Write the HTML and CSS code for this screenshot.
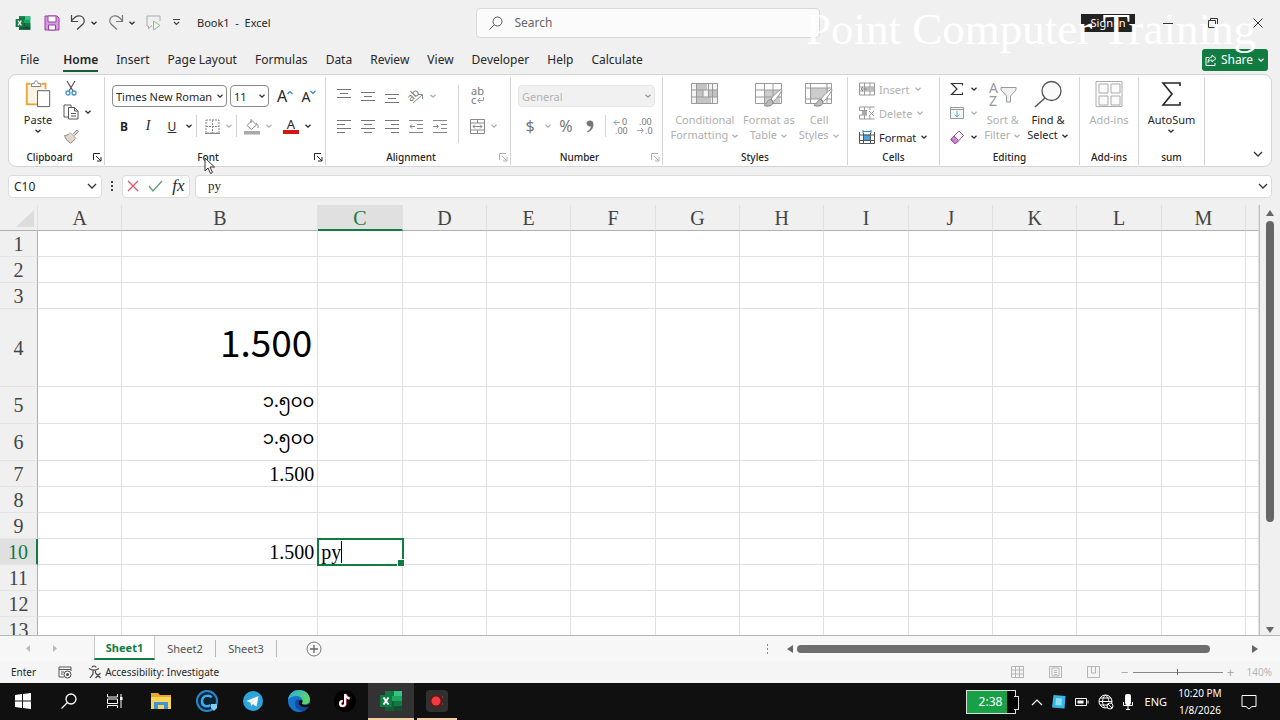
FILE: index.html
```
<!DOCTYPE html>
<html lang="en">

<head>
    <meta charset="UTF-8">
    <meta name="viewport" content="width=device-width, initial-scale=1.0">
    <title>Book1 - Excel</title>
    <link rel="stylesheet" href="styles.css">
</head>

<body>
    <svg class="sprite" aria-hidden="true">
        <symbol id="chev" viewBox="0 0 8 8"><path d="M1.5 2.8 4 5.2 6.5 2.8" fill="none" stroke="currentColor" stroke-width="1.3" /></symbol>
        <symbol id="launch" viewBox="0 0 9 9"><path d="M.5 7V.5H7M3 3l5 5M8 4v4H4" fill="none" stroke="currentColor" /></symbol>
        <symbol id="sigma" viewBox="0 0 22 26"><path d="M20 5V2H3l9 11-9 11h17v-3" fill="none" stroke="currentColor" stroke-width="1.6" /></symbol>
        <symbol id="excel" viewBox="0 0 24 22">
            <path d="M6 1h17v20H6z" fill="#21a366" />
            <path d="M6 1h9v5H6z" fill="#107c41" />
            <path d="M15 1h8v5h-8z" fill="#33c481" />
            <path d="M6 11h9v10H6z" fill="#185c37" />
            <path d="M15 11h8v5h-8z" fill="#107c41" />
            <path d="M15 16h8v5h-8z" fill="#134f30" />
            <path d="M1 5h12v12H1z" fill="#107c41" />
            <path d="m4.5 7.500 5 7M9.500 7.500l-5 7" stroke="#fff" stroke-width="2" />
        </symbol>
        <symbol id="brush" viewBox="0 0 20 20">
            <path d="M18.500 1C14 4 10 8 8 11l2.500 2.500C14 10 17 6 19 2z" fill="#fff" stroke="#999" />
            <path d="M7.500 11.500c-3 0-3 3.500-6.500 6 4 1.500 9 .5 9-3.500z" fill="#bbb" stroke="#888" />
        </symbol>
    </svg>

    <header class="titlebar">
        <div class="quick">
            <svg class="logo" viewBox="0 0 24 22"><use href="#excel" /></svg>
            <button class="tool" aria-label="Save"><svg width="16" height="16" viewBox="0 0 16 16"><path d="M1 1h12l2 2v12H1z" fill="#d99be0" stroke="#9a3fa5" /><path d="M4 1h8v6H4zM4.500 10h7v5h-7z" fill="#fff" stroke="#9a3fa5" /></svg></button>
            <button class="tool" aria-label="Undo"><svg width="16" height="17" viewBox="0 0 16 17"><path d="M1.500 1v6.500H8M1.500 7C4 3.500 7 1 10.500 2s5 5 2.500 8l-6 5.500" fill="none" stroke="#444" stroke-width="1.200" /></svg><svg class="chev"><use href="#chev" /></svg></button>
            <button class="tool" aria-label="Redo"><svg width="16" height="17" viewBox="0 0 16 17"><path d="M14.500 1v6.500H8M14.500 7C12 3.500 9 1 5.500 2s-5 5-2.500 8l6 5.500" fill="none" stroke="#777" stroke-width="1.200" /></svg><svg class="chev"><use href="#chev" /></svg></button>
            <button class="tool" aria-label="Speak cells"><svg width="16" height="16" viewBox="0 0 16 16"><path d="M6 11H5l-2.500 3v-3H1V1h13v5" fill="none" stroke="#aaa" /><path d="m7.500 6 6.500 4.500L7.500 15z" fill="#eef7ee" stroke="#8fbc94" /></svg></button>
            <button class="tool" aria-label="Customize toolbar"><svg width="9" height="9" viewBox="0 0 9 9"><path d="M1 1.500h7M2 4l2.500 2.500L7 4" fill="none" stroke="#444" stroke-width="1.200" /></svg></button>
            <h1>Book1&nbsp; -&nbsp; Excel</h1>
        </div>
        <label class="search">
            <svg width="14" height="14" viewBox="0 0 14 14"><circle cx="8.500" cy="5.500" r="4.500" fill="none" stroke="#555" /><path d="M5.500 8.500.5 13.500" stroke="#555" /></svg>
            <input type="search" placeholder="Search" aria-label="Search">
        </label>
        <div class="window-actions">
            <button class="signin">Sign in</button>
            <button class="win" aria-label="Minimize"><svg width="10" height="10" viewBox="0 0 10 10"><path d="M0 5.500h10" stroke="#333" /></svg></button>
            <button class="win" aria-label="Restore"><svg width="10" height="10" viewBox="0 0 10 10"><path d="M.5 2.500h7v7h-7zM2.500 2.500v-2h7v7h-2" fill="none" stroke="#333" /></svg></button>
            <button class="win" aria-label="Close"><svg width="10" height="10" viewBox="0 0 10 10"><path d="m.5.5 9 9M9.500.5l-9 9" stroke="#333" /></svg></button>
        </div>
        <div class="watermark">Point Computer Training</div>
    </header>

    <nav class="menu">
        <a href="#" class="file">File</a>
        <a href="#" class="active">Home</a>
        <a href="#">Insert</a>
        <a href="#">Page Layout</a>
        <a href="#">Formulas</a>
        <a href="#">Data</a>
        <a href="#">Review</a>
        <a href="#">View</a>
        <a href="#">Developer</a>
        <a href="#">Help</a>
        <a href="#">Calculate</a>
        <button class="share"><svg width="12" height="12" viewBox="0 0 12 12"><path d="M4 3.500H1v8h9V9M7 1l4 3.500L7 8V6C5 6 4 7 3 8.500 3 5 5 3 7 3z" fill="none" stroke="#fff" /></svg>Share<svg class="chev"><use href="#chev" /></svg></button>
    </nav>

    <section class="ribbon">
        <div class="group clipboard">
            <div class="body">
                <button class="big"><svg width="28" height="30" viewBox="0 0 28 30"><path d="M6 4H2v22h11M18 4h4v6" fill="none" stroke="#e8a33d" stroke-width="2" /><path d="M3.500 5.500h17V12H13v13H3.500z" fill="#fdf3e1" /><path d="M7 7V4h3c0-4 4-4 4 0h3v3z" fill="#fff" stroke="#777" /><path d="M13.500 11.500h13v17h-13z" fill="#fff" stroke="#555" /></svg>Paste<svg class="chev"><use href="#chev" /></svg></button>
                <div class="stack">
                    <button class="ico" aria-label="Cut"><svg width="12" height="15" viewBox="0 0 12 15"><path d="m2 0 6 10M10 0 4 10" stroke="#555" stroke-width="1.200" /><circle cx="3" cy="12" r="2" fill="none" stroke="#3a93cc" stroke-width="1.300" /><circle cx="9" cy="12" r="2" fill="none" stroke="#3a93cc" stroke-width="1.300" /></svg></button>
                    <div class="row">
                        <button class="ico" aria-label="Copy"><svg width="16" height="16" viewBox="0 0 16 16"><path d="M5 13H1V1h7v2" fill="none" stroke="#555" /><path d="M5.500 3.500h6l3.500 3.500v8H5.500zM11.500 3.500V7H15M8 9.500h5M8 12h5" fill="none" stroke="#555" /></svg></button>
                        <button class="drop" aria-label="Copy options"><svg class="chev"><use href="#chev" /></svg></button>
                    </div>
                    <button class="ico" aria-label="Format painter"><svg width="15" height="15" viewBox="0 0 15 15"><path d="m9 5 4-4 1.500 1.500-4 4" fill="#ddd" stroke="#888" /><path d="m6 3.500 6 6M5.500 4.500C4 6 2 6.500.5 6.500c1 3.500 3 6 6 7.500 2-1 4-3 4.500-4.500" fill="#e6d6ca" stroke="#888" /></svg></button>
                </div>
            </div>
            <footer><span>Clipboard</span><button class="launch" aria-label="Clipboard settings"><svg><use href="#launch" /></svg></button></footer>
        </div>

        <div class="group font">
            <div class="body rows">
                <div class="row">
                    <select class="combo font-name" aria-label="Font"><option>Times New Roman</option></select>
                    <select class="combo font-size" aria-label="Font size"><option>11</option></select>
                    <button class="ico grow" aria-label="Increase font size">A<svg width="6" height="5" viewBox="0 0 6 5"><path d="m.5 4 2.500-2.500L5.500 4" fill="none" stroke="#2b7fb8" stroke-width="1.200" /></svg></button>
                    <button class="ico grow shrink" aria-label="Decrease font size">A<svg width="6" height="5" viewBox="0 0 6 5"><path d="M.5 1 3 3.500 5.500 1" fill="none" stroke="#2b7fb8" stroke-width="1.200" /></svg></button>
                </div>
                <div class="row">
                    <button class="ico bold">B</button>
                    <button class="ico italic">I</button>
                    <button class="ico underline">U</button>
                    <button class="drop" aria-label="Underline style"><svg class="chev"><use href="#chev" /></svg></button>
                    <i class="sep"></i>
                    <button class="ico off" aria-label="Borders"><svg width="15" height="15" viewBox="0 0 15 15"><path d="M1 1h13v13H1zM7.500 1v13M1 7.500h13" fill="none" stroke="#888" stroke-dasharray="2 1" /><path d="M0 14.500h15" stroke="#888" /></svg></button>
                    <button class="drop off" aria-label="Border style"><svg class="chev"><use href="#chev" /></svg></button>
                    <i class="sep"></i>
                    <button class="ico off" aria-label="Fill color"><svg width="16" height="17" viewBox="0 0 16 17"><path d="M3 7.500 8 2.500l4.500 4.500-5 4.500zM7 1v4M12 5c2 2 2.500 3 2 5" fill="none" stroke="#888" /><path d="M0 13h16v3.500H0z" fill="#aaa" /></svg></button>
                    <button class="drop off" aria-label="Fill colors"><svg class="chev"><use href="#chev" /></svg></button>
                    <button class="ico color">A</button>
                    <button class="drop" aria-label="Font colors"><svg class="chev"><use href="#chev" /></svg></button>
                </div>
            </div>
            <footer><span>Font</span><button class="launch" aria-label="Font settings"><svg><use href="#launch" /></svg></button></footer>
        </div>

        <div class="group align off">
            <div class="body">
                <div class="rows">
                    <div class="row">
                        <button class="ico" aria-label="Top align"><svg width="14" height="14" viewBox="0 0 14 14"><path d="M0 .5h14M3 4.500h8M0 8.500h14" stroke="#777" /></svg></button>
                        <button class="ico" aria-label="Middle align"><svg width="14" height="14" viewBox="0 0 14 14"><path d="M0 3.500h14M3 7.500h8M0 11.500h14" stroke="#777" /></svg></button>
                        <button class="ico" aria-label="Bottom align"><svg width="14" height="14" viewBox="0 0 14 14"><path d="M0 5.500h14M3 9.500h8M0 13.500h14" stroke="#777" /></svg></button>
                        <button class="ico" aria-label="Orientation"><svg width="16" height="15" viewBox="0 0 16 15"><path d="m5 14 9-8M10 5.500h4.500V10" fill="none" stroke="#888" /><text x="-1" y="10" font-size="11" fill="#777" transform="rotate(-45 5 7)">ab</text></svg></button>
                        <button class="drop" aria-label="Orientation options"><svg class="chev"><use href="#chev" /></svg></button>
                    </div>
                    <div class="row">
                        <button class="ico" aria-label="Align left"><svg width="14" height="14" viewBox="0 0 14 14"><path d="M0 1.500h14M0 5.500h8M0 9.500h14M0 13.500h8" stroke="#777" /></svg></button>
                        <button class="ico" aria-label="Center"><svg width="14" height="14" viewBox="0 0 14 14"><path d="M0 1.500h14M3 5.500h8M0 9.500h14M3 13.500h8" stroke="#777" /></svg></button>
                        <button class="ico" aria-label="Align right"><svg width="14" height="14" viewBox="0 0 14 14"><path d="M0 1.500h14M6 5.500h8M0 9.500h14M6 13.500h8" stroke="#777" /></svg></button>
                        <button class="ico" aria-label="Decrease indent"><svg width="14" height="14" viewBox="0 0 14 14"><path d="M0 1.500h14M8 5.500h6M8 9.500h6M0 13.500h14M1 7.500h5M3 5.500l-2 2 2 2" fill="none" stroke="#888" /></svg></button>
                        <button class="ico" aria-label="Increase indent"><svg width="14" height="14" viewBox="0 0 14 14"><path d="M0 1.500h14M8 5.500h6M8 9.500h6M0 13.500h14M0 7.500h5M3.500 5.500l2 2-2 2" fill="none" stroke="#888" /></svg></button>
                    </div>
                </div>
                <i class="sep tall"></i>
                <div class="rows">
                    <div class="row">
                        <button class="ico" aria-label="Wrap text"><svg width="16" height="18" viewBox="0 0 16 18"><text x="2" y="8" font-size="11" fill="#777">ab</text><text x="2" y="17" font-size="11" fill="#777">c</text><path d="M14.500 10v3.500H9M11 11l-2.500 2.500L11 16" fill="none" stroke="#8aaebf" /></svg></button>
                    </div>
                    <div class="row">
                        <button class="ico" aria-label="Merge and center"><svg width="15" height="15" viewBox="0 0 15 15"><path d="M.5.500h14v14H.5zM.5 4h14M.5 11h14M7.500.500V4M7.500 11v3.500M3 7.500h9M5 5.500l-2 2 2 2M10 5.500l2 2-2 2" fill="none" stroke="#888" /></svg></button>
                        <button class="drop" aria-label="Merge options"><svg class="chev"><use href="#chev" /></svg></button>
                    </div>
                </div>
            </div>
            <footer><span>Alignment</span><button class="launch" aria-label="Alignment settings"><svg><use href="#launch" /></svg></button></footer>
        </div>

        <div class="group number off">
            <div class="body rows">
                <select class="combo" aria-label="Number format" disabled><option>General</option></select>
                <div class="row">
                    <button class="ico symbol">$</button>
                    <button class="drop" aria-label="Currency options"><svg class="chev"><use href="#chev" /></svg></button>
                    <button class="ico symbol">%</button>
                    <button class="ico" aria-label="Comma style"><svg width="8" height="13" viewBox="0 0 8 13"><path d="M4 .500C1.500.500.500 2 .500 3.500S2 6.500 4 6.500c.500 0 1 0 1 0-.500 2-2 4-4 5l.500 1C5.500 11 7.500 8 7.500 4.500 7.500 2 6 .500 4 .500z" fill="#777" /></svg></button>
                    <i class="sep"></i>
                    <button class="ico" aria-label="Increase decimal"><svg width="16" height="16" viewBox="0 0 16 16"><text x="9" y="7" font-size="9" fill="#777">0</text><text x="2" y="16" font-size="9" fill="#777">.00</text><path d="M7 4.500H1M3.500 2 1 4.500 3.500 7" fill="none" stroke="#7fa8bc" /></svg></button>
                    <button class="ico" aria-label="Decrease decimal"><svg width="16" height="16" viewBox="0 0 16 16"><text x="2" y="7" font-size="9" fill="#777">.00</text><text x="8" y="16" font-size="9" fill="#777">.0</text><path d="M0 12.500h6M4 10l2.500 2.500L4 15" fill="none" stroke="#aaa" /></svg></button>
                </div>
            </div>
            <footer><span>Number</span><button class="launch" aria-label="Number settings"><svg><use href="#launch" /></svg></button></footer>
        </div>

        <div class="group styles off">
            <div class="body">
                <button class="big"><svg width="28" height="26" viewBox="0 0 28 26"><path d="M.5 2.500h26v20H.5z" fill="#f3f3f3" /><path d="M5 2h11v7H5zM5 9h7v7H5zM5 16h15v7H5zM17 9h9v7h-9z" fill="#c4c4c4" /><path d="M.5 2.500h26v20H.5zM.5 9h26M.5 16h26M5.500 2.500v20M12 9v7M17.500 2.500V16M21.500 2.500v20" fill="none" stroke="#999" /></svg><span>Conditional<br>Formatting <svg class="chev"><use href="#chev" /></svg></span></button>
                <button class="big"><svg width="28" height="26" viewBox="0 0 28 26"><path d="M9 9h16v14H9z" fill="#ccc" /><path d="M.5 2.500h26v20H.5zM.5 9h26M.5 16h26M9.500 2.500v20M18 2.500v20" fill="none" stroke="#999" /><use href="#brush" x="8" y="7" width="20" height="20" /></svg><span>Format as<br>Table <svg class="chev"><use href="#chev" /></svg></span></button>
                <button class="big"><svg width="28" height="26" viewBox="0 0 28 26"><path d="M5 7h18v11H5z" fill="#ccc" /><path d="M.5 2.500h26v20H.5zM.5 7h26M.5 18h26M5.500 2.500v20M22 2.500v20" fill="none" stroke="#999" /><use href="#brush" x="8" y="7" width="20" height="20" /></svg><span>Cell<br>Styles <svg class="chev"><use href="#chev" /></svg></span></button>
            </div>
            <footer><span>Styles</span></footer>
        </div>

        <div class="group cells">
            <div class="body lines">
                <button class="line off"><svg width="16" height="14" viewBox="0 0 16 14"><path d="M.5 1v12h15V1zM5.500 1v12M11 1v12M.5 5h15M.5 9h15" fill="none" stroke="#999" /><path d="M6 5h9v4H6z" fill="#bbb" /><path d="M8 7H2M4 5 2 7l2 2" fill="none" stroke="#888" /></svg><span>Insert</span><svg class="chev"><use href="#chev" /></svg></button>
                <button class="line off"><svg width="16" height="14" viewBox="0 0 16 14"><path d="M.5 1h15M.5 4.500H8M.5 9H8M.5 13h15M5.500 1v12M11 1v3M11 10v3M.5 1v3.500M.5 9v4" fill="none" stroke="#999" /><path d="M3 5h5v4H3z" fill="#aaa" /><path d="m10 5 5 5M15 5l-5 5" stroke="#999" /></svg><span>Delete</span><svg class="chev"><use href="#chev" /></svg></button>
                <button class="line"><svg width="16" height="15" viewBox="0 0 16 15"><path d="M4.500 4.500h7v6h-7z" fill="#4aa3dc" /><path d="M.5 2v11.500h15V2M.5 5h15M.5 10.500h15M4.500 3v11M11.500 3v11" fill="none" stroke="#555" /><path d="M4 1.500h8M4 0v3M12 0v3" stroke="#2b88c4" /></svg><span>Format</span><svg class="chev"><use href="#chev" /></svg></button>
            </div>
            <footer><span>Cells</span></footer>
        </div>

        <div class="group editing">
            <div class="body">
                <div class="lines">
                    <button class="line" aria-label="Sum"><svg width="14" height="14" viewBox="0 0 14 14"><path d="M12.500 3.500v-2h-11L7 7l-5.500 5.500h11v-2" fill="none" stroke="#333" stroke-width="1.200" /></svg><svg class="chev"><use href="#chev" /></svg></button>
                    <button class="line off" aria-label="Fill"><svg width="14" height="14" viewBox="0 0 14 14"><path d="M.5 1.500h13v11H.5z" fill="#f2f8fa" stroke="#999" /><path d="M.5 3.500h13" stroke="#999" /><path d="M7 5v6M4.500 8.500 7 11l2.500-2.500" fill="none" stroke="#6da9c0" /></svg><svg class="chev"><use href="#chev" /></svg></button>
                    <button class="line" aria-label="Clear"><svg width="14" height="14" viewBox="0 0 14 14"><path d="m1 9 8-8 4.500 4.500-7.500 8H4.500L1 10z" fill="#fff" stroke="#9a4fa5" /><path d="M1 9 4 6l4.500 4.500-3 3H4.500z" fill="#ce83d6" stroke="#9a4fa5" /></svg><svg class="chev"><use href="#chev" /></svg></button>
                </div>
                <button class="big off"><svg width="28" height="28" viewBox="0 0 28 28"><text x="0" y="13" font-size="14" fill="#999">A</text><text x="0" y="26" font-size="14" fill="#999">Z</text><path d="M12 7.500h15v2.500l-5.500 6v6h-4v-6L12 10z" fill="#f0f0f0" stroke="#999" /></svg><span>Sort &amp;<br>Filter <svg class="chev"><use href="#chev" /></svg></span></button>
                <button class="big"><svg width="28" height="28" viewBox="0 0 28 28"><circle cx="17.500" cy="11" r="9.500" fill="#fafafa" stroke="#555" stroke-width="1.300" /><path d="M11 18 1 27" stroke="#555" stroke-width="1.500" /></svg><span>Find &amp;<br>Select <svg class="chev"><use href="#chev" /></svg></span></button>
            </div>
            <footer><span>Editing</span></footer>
        </div>

        <div class="group addins off">
            <div class="body">
                <button class="big"><svg width="28" height="28" viewBox="0 0 28 28"><path d="M1 1.500h26v25H1z" fill="none" stroke="#aaa" /><path d="M4 4h9v9H4zM16 4h9v9h-9zM4 16h9v9H4zM16 16h9v9h-9z" fill="#fafafa" stroke="#aaa" /></svg>Add-ins</button>
            </div>
            <footer><span>Add-ins</span></footer>
        </div>

        <div class="group sum">
            <div class="body">
                <button class="big"><svg width="22" height="26"><use href="#sigma" /></svg>AutoSum<svg class="chev"><use href="#chev" /></svg></button>
            </div>
            <footer><span>sum</span></footer>
        </div>
        <button class="collapse" aria-label="Collapse ribbon"><svg width="10" height="6" viewBox="0 0 10 6"><path d="m1 1 4 4 4-4" fill="none" stroke="#333" stroke-width="1.300" /></svg></button>
    </section>

    <div class="formula-bar">
        <select class="name-box" aria-label="Name box"><option>C10</option></select>
        <svg class="dots" width="4" height="12" viewBox="0 0 4 12"><path d="M1 1h2v2H1zM1 5h2v2H1zM1 9h2v2H1z" fill="#444" /></svg>
        <div class="fx">
            <button aria-label="Cancel"><svg width="12" height="12" viewBox="0 0 12 12"><path d="m1 1 10 10M11 1 1 11" stroke="#d9596b" stroke-width="1.300" /></svg></button>
            <button aria-label="Enter"><svg width="15" height="12" viewBox="0 0 15 12"><path d="m1 6 4 5 9-10" fill="none" stroke="#5f9e77" stroke-width="1.300" /></svg></button>
            <button class="fn" aria-label="Insert function">fx</button>
        </div>
        <div class="formula">
            <input type="text" value="py" aria-label="Formula">
            <svg width="10" height="6" viewBox="0 0 10 6"><path d="m1 1 4 4 4-4" fill="none" stroke="#333" stroke-width="1.300" /></svg>
        </div>
    </div>

    <main class="sheet">
        <div class="grid">
            <table>
                <colgroup>
                    <col class="c-head"><col><col class="c-wide"><col><col><col><col><col><col><col><col><col><col><col><col class="c-rest">
                </colgroup>
                <thead>
                    <tr>
                        <th class="corner"><svg width="18" height="17" viewBox="0 0 18 17"><path d="M18 0v17H0z" fill="#dcdcdc" /></svg></th>
                        <th>A</th><th>B</th><th class="selected">C</th><th>D</th><th>E</th><th>F</th><th>G</th><th>H</th><th>I</th><th>J</th><th>K</th><th>L</th><th>M</th><th></th>
                    </tr>
                </thead>
                <tbody>
                    <tr><th>1</th><td></td><td></td><td></td><td></td><td></td><td></td><td></td><td></td><td></td><td></td><td></td><td></td><td></td><td></td></tr>
                    <tr><th>2</th><td></td><td></td><td></td><td></td><td></td><td></td><td></td><td></td><td></td><td></td><td></td><td></td><td></td><td></td></tr>
                    <tr><th>3</th><td></td><td></td><td></td><td></td><td></td><td></td><td></td><td></td><td></td><td></td><td></td><td></td><td></td><td></td></tr>
                    <tr class="h-large"><th>4</th><td></td><td class="large">1.500</td><td></td><td></td><td></td><td></td><td></td><td></td><td></td><td></td><td></td><td></td><td></td><td></td></tr>
                    <tr class="h-mid"><th>5</th><td></td><td class="myanmar" lang="my">၁.၅၀၀</td><td></td><td></td><td></td><td></td><td></td><td></td><td></td><td></td><td></td><td></td><td></td><td></td></tr>
                    <tr class="h-mid"><th>6</th><td></td><td class="myanmar" lang="my">၁.၅၀၀</td><td></td><td></td><td></td><td></td><td></td><td></td><td></td><td></td><td></td><td></td><td></td><td></td></tr>
                    <tr><th>7</th><td></td><td>1.500</td><td></td><td></td><td></td><td></td><td></td><td></td><td></td><td></td><td></td><td></td><td></td><td></td></tr>
                    <tr><th>8</th><td></td><td></td><td></td><td></td><td></td><td></td><td></td><td></td><td></td><td></td><td></td><td></td><td></td><td></td></tr>
                    <tr><th>9</th><td></td><td></td><td></td><td></td><td></td><td></td><td></td><td></td><td></td><td></td><td></td><td></td><td></td><td></td></tr>
                    <tr><th class="selected">10</th><td></td><td>1.500</td><td class="editing-cell"><span class="caret">py</span></td><td></td><td></td><td></td><td></td><td></td><td></td><td></td><td></td><td></td><td></td><td></td></tr>
                    <tr><th>11</th><td></td><td></td><td></td><td></td><td></td><td></td><td></td><td></td><td></td><td></td><td></td><td></td><td></td><td></td></tr>
                    <tr><th>12</th><td></td><td></td><td></td><td></td><td></td><td></td><td></td><td></td><td></td><td></td><td></td><td></td><td></td><td></td></tr>
                    <tr><th>13</th><td></td><td></td><td></td><td></td><td></td><td></td><td></td><td></td><td></td><td></td><td></td><td></td><td></td><td></td></tr>
                </tbody>
            </table>
        </div>
        <div class="vscroll">
            <svg width="8" height="6" viewBox="0 0 8 6"><path d="M4 0 8 6H0z" fill="#666" /></svg>
            <div class="vtrack"><div class="vthumb"></div></div>
            <svg width="8" height="6" viewBox="0 0 8 6"><path d="M4 6 0 0h8z" fill="#666" /></svg>
        </div>
    </main>

    <div class="tabs">
        <button class="nav" aria-label="Previous sheet"><svg width="4" height="7" viewBox="0 0 4 7"><path d="M4 0v7L0 3.500z" fill="#bbb" /></svg></button>
        <button class="nav" aria-label="Next sheet"><svg width="4" height="7" viewBox="0 0 4 7"><path d="M0 0v7l4-3.500z" fill="#bbb" /></svg></button>
        <button class="tab active">Sheet1</button>
        <button class="tab">Sheet2</button>
        <button class="tab">Sheet3</button>
        <button class="add" aria-label="New sheet"><svg width="16" height="16" viewBox="0 0 16 16"><circle cx="8" cy="8" r="7" fill="none" stroke="#777" /><path d="M4 8h8M8 4v8" stroke="#666" stroke-width="1.300" /></svg></button>
        <div class="hscroll">
            <svg class="dots" width="2" height="12" viewBox="0 0 2 12"><path d="M0 1h1v2H0zM0 5h1v2H0zM0 9h1v2H0z" fill="#888" /></svg>
            <svg width="6" height="8" viewBox="0 0 6 8"><path d="M6 0v8L0 4z" fill="#666" /></svg>
            <div class="htrack"><div class="hthumb"></div></div>
            <svg width="6" height="8" viewBox="0 0 6 8"><path d="M0 0v8l6-4z" fill="#666" /></svg>
        </div>
    </div>

    <div class="status">
        <span class="mode">Enter</span>
        <button aria-label="Record macro"><svg width="14" height="13" viewBox="0 0 14 13"><path d="M6 11H1V1h12v4M1 3.500h12M3 6h3M3 8h2" fill="none" stroke="#555" /><circle cx="9.500" cy="8.500" r="3.500" fill="#fff" stroke="#444" /><circle cx="9.500" cy="8.500" r="1.500" fill="#444" /></svg></button>
        <button class="access"><svg width="14" height="14" viewBox="0 0 14 14"><path d="M1 3.500c3 2 7 2 10 0M5 5v4l-3 4M7.500 5v3M4 2.500a2 1.500 0 0 1 4 0M7.500 8l5 5M12.500 8l-5 5" fill="none" stroke="#444" stroke-width="1.200" /></svg>Accessibility: Investigate</button>
        <div class="views">
            <button aria-label="Normal view"><svg width="13" height="12" viewBox="0 0 13 12"><path d="M.5.500h12v11H.5zM.5 4h12M.5 8h12M4.500.500v11M8.500.500v11" fill="none" stroke="#b5b5b5" /></svg></button>
            <button aria-label="Page layout view"><svg width="13" height="12" viewBox="0 0 13 12"><path d="M.5.500h12v11H.5zM3 2h7v8H3zM5 4.500h3M5 6.500h3M5 8.500h3" fill="none" stroke="#b5b5b5" /></svg></button>
            <button aria-label="Page break view"><svg width="13" height="12" viewBox="0 0 13 12"><path d="M.5.500h12v11H.5zM4.500.500V7M8.500.500V7h-4" fill="none" stroke="#b5b5b5" /></svg></button>
        </div>
        <button class="zoom-btn" aria-label="Zoom out">−</button>
        <input type="range" min="0" max="100" value="50" aria-label="Zoom">
        <button class="zoom-btn" aria-label="Zoom in">+</button>
        <span class="zoom">140%</span>
    </div>

    <footer class="taskbar">
        <button class="app" aria-label="Start"><svg width="16" height="16" viewBox="0 0 16 16"><path d="m0 2 7-1v6.500H0zM8 .900 16 0v7.500H8zM0 8.500h7V15l-7-1zM8 8.500h8V16l-8-1z" fill="#fff" /></svg></button>
        <button class="app" aria-label="Search"><svg width="16" height="16" viewBox="0 0 16 16"><circle cx="10" cy="6" r="5" fill="none" stroke="#fff" stroke-width="1.300" /><path d="M6.500 9.500.5 15.500" stroke="#fff" stroke-width="1.300" /></svg></button>
        <button class="app" aria-label="Task view"><svg width="16" height="16" viewBox="0 0 16 16"><path d="M.5 1v3h10V1M.5 6h10v4.500H.5zM.5 15v-2.500h10V15M14 1v14" fill="none" stroke="#fff" /><path d="M13 4h2.500v3H13z" fill="#fff" /></svg></button>
        <button class="app" aria-label="File Explorer"><svg width="22" height="18" viewBox="0 0 22 18"><path d="M1 1h7l2 2h11v14H1z" fill="#e5aa2c" /><path d="M1 5h20v12H1z" fill="#fbd45c" /><path d="M4 17v-7h14v7h-4v-4H8v4z" fill="#3d95d6" /></svg></button>
        <button class="app" aria-label="C browser"><svg width="24" height="24" viewBox="0 0 24 24"><circle cx="12" cy="12" r="10" fill="#0b2233" stroke="#2388ce" stroke-width="2" /><path d="M16.500 8.500c-2-3-9-2.500-9.500 3.500-.500 5.500 5.500 6.500 8.500 4" fill="none" stroke="#39aef0" stroke-width="2.500" /><path d="M16 15h6v4l-3 3-3-3z" fill="#7ccff5" /></svg></button>
        <button class="app" aria-label="Telegram"><svg width="20" height="20" viewBox="0 0 20 20"><circle cx="10" cy="10" r="10" fill="#2da5dc" /><path d="m3.500 10 12-5-2 10.500-3.500-2.500-2 2-.500-3.500z" fill="#fff" /><path d="m7.500 11.500 6-4.500-5 5z" fill="#b5dcf0" /></svg></button>
        <button class="app" aria-label="Edge"><svg width="24" height="24" viewBox="0 0 24 24"><defs><linearGradient id="edge-top" x1="0" y1="0" x2="1" y2=".4"><stop offset="0" stop-color="#2aa9e8" /><stop offset="1" stop-color="#5fd66a" /></linearGradient></defs><circle cx="12" cy="12" r="11" fill="#1674cf" /><path d="M1 11C2 4 7 1 12 1c7 0 11 5 11 9.500 0 4-4 5.500-7.500 4.500-2-1 0-1.500 0-3.500C15 6 5 5 1 11z" fill="url(#edge-top)" /><path d="M8 13c-1 5 3 9 8 9 3-1 5-3 6-5-4 2.500-9 1.500-10-2-.500-2 .500-3 1-4-2-1-4.500 0-5 2z" fill="#124b9a" /><path d="M12.500 11.500c2-1 3.500 0 3 1.500-.500 1-1 2 .500 2.500 2 1 5 .5 7-1.500l-1 3.500c-4 2-9 .5-10-2.500-.500-1.500 0-3 .500-3.500z" fill="#101010" /></svg></button>
        <button class="app" aria-label="TikTok"><svg width="22" height="22" viewBox="0 0 22 22"><circle cx="11" cy="11" r="11" fill="#000" /><path d="M11.500 4v9.500a2.500 2.500 0 1 1-2.500-2.500M11.500 4c.500 3 2 4 4.500 4.500" fill="none" stroke="#ee4460" stroke-width="2.500" /><path d="M11 4v9.500a2.500 2.500 0 1 1-2.500-2.500M11 4c.500 3 2 4 4.500 4.500" fill="none" stroke="#fff" stroke-width="2" /></svg></button>
        <button class="app current" aria-label="Excel"><svg width="24" height="22" viewBox="0 0 24 22"><use href="#excel" /></svg></button>
        <button class="app open" aria-label="Recorder"><svg width="22" height="22" viewBox="0 0 22 22"><rect width="22" height="22" rx="4" fill="#303030" /><circle cx="10" cy="11" r="6.500" fill="#61191b" /><circle cx="10" cy="11" r="4.500" fill="#f13b40" /><path d="M16 7h1M16 14h1" stroke="#f13b40" /></svg></button>

        <div class="tray">
            <div class="battery"><span>2:38</span></div>
            <svg width="12" height="8" viewBox="0 0 12 8"><path d="m1 7 5-5 5 5" fill="none" stroke="#fff" stroke-width="1.200" /></svg>
            <svg width="14" height="14" viewBox="0 0 14 14"><path d="m1.500 0 12 1-1 12.500L0 12.500z" fill="#35b6e5" /><path d="m4 3 6 .500-.500 7-6-.500z" fill="#8bdcf5" /></svg>
            <svg width="14" height="10" viewBox="0 0 14 10"><path d="M.5 1.500h11v7H.5zM13 3.500v3" fill="none" stroke="#fff" /><path d="M2.500 3.500h6v3h-6z" fill="#fff" /></svg>
            <svg width="16" height="16" viewBox="0 0 16 16"><circle cx="7.500" cy="7.500" r="6.500" fill="none" stroke="#fff" /><path d="M1 7.500h13M2 4h11M2 11h7M7.500 1c-4 4-4 9 0 13M7.500 1c3 3 3.500 5 3 7" fill="none" stroke="#fff" /><circle cx="12" cy="12" r="3" fill="#101010" stroke="#fff" /><path d="m10 10 4 4" stroke="#fff" /></svg>
            <svg width="10" height="16" viewBox="0 0 10 16"><rect x="2" width="6" height="11" rx="2" fill="#fff" /><path d="M.5 8v3.500h9V8M5 12v3M3 15.500h4" fill="none" stroke="#fff" /></svg>
            <span class="lang">ENG</span>
            <time class="clock">10:20 PM<br>1/8/2026</time>
            <svg width="16" height="16" viewBox="0 0 16 16"><path d="M1 1.500h14v11h-4L8 15l-3-2.500H1z" fill="none" stroke="#fff" /></svg>
        </div>
    </footer>

    <svg class="pointer" width="12" height="18" viewBox="0 0 12 18"><path d="M1 1v13l3-3 2.500 5.500 2-1L6 10h4.500z" fill="#fff" stroke="#333" /></svg>
</body>

</html>
```

FILE: styles.css
```
:root {
    --chrome: #f0f0f0;
    --line: #d4d4d4;
    --grid-line: #e0e0e0;
    --green: #107c41;
    --text: #262626;
    --muted: #b0b0b0;
}

* {
    box-sizing: border-box;
}

body {
    margin: 0;
    height: 100vh;
    display: flex;
    flex-direction: column;
    overflow: hidden;
    position: relative;
    background: var(--chrome);
    color: var(--text);
    font-family: "Noto Sans", sans-serif;
    font-size: 12px;
}

button,
input,
select {
    font: inherit;
    color: inherit;
    border: none;
    background: none;
    padding: 0;
    margin: 0;
}

button {
    display: flex;
    align-items: center;
    justify-content: center;
}

svg {
    flex: none;
    overflow: visible;
}

.sprite {
    position: absolute;
    width: 0;
    height: 0;
}

.chev {
    width: 8px;
    height: 8px;
}

/* title bar */
.titlebar {
    height: 45px;
    flex: none;
    display: flex;
    align-items: center;
    position: relative;
}

.quick {
    flex: 1;
    display: flex;
    align-items: center;
    gap: 10px;
    padding-left: 15px;
}

.logo {
    width: 16px;
    height: 16px;
    margin-right: 3px;
}

.tool {
    gap: 4px;
}

.quick h1 {
    margin: 0 0 0 6px;
    font-size: 11px;
    font-weight: normal;
}

.search {
    flex: 0 1 344px;
    height: 30px;
    display: flex;
    align-items: center;
    gap: 12px;
    padding: 0 12px;
    background: #fbfbfb;
    border: 1px solid #d8d8d8;
    border-radius: 4px;
}

.search input {
    flex: 1;
    min-width: 0;
    outline: none;
}

.search input::placeholder {
    color: #666;
}

.window-actions {
    flex: 1;
    display: flex;
    justify-content: flex-end;
    align-items: center;
}

.signin {
    width: 54px;
    height: 18px;
    margin-right: 10px;
    background: #222;
    color: #fff;
    font-size: 11px;
}

.win {
    width: 45px;
    height: 30px;
}

.watermark {
    position: absolute;
    right: 24px;
    top: 4px;
    color: #fff;
    font: 45px/50px "Liberation Serif", serif;
    white-space: nowrap;
    pointer-events: none;
    z-index: 2;
}

/* menu */
.menu {
    height: 29px;
    flex: none;
    display: flex;
    align-items: center;
    gap: 18px;
    padding: 0 12px 0 20px;
}

.menu a {
    height: 24px;
    line-height: 24px;
    color: var(--text);
    text-decoration: none;
    border-bottom: 2px solid transparent;
}

.menu .file {
    margin-right: 6px;
}

.menu .active {
    font-weight: 600;
    border-color: #185c37;
}

.share {
    width: 66px;
    height: 22px;
    margin-left: auto;
    gap: 4px;
    border-radius: 3px;
    background: var(--green);
    color: #fff;
}

/* ribbon */
.ribbon {
    height: 93px;
    flex: none;
    display: flex;
    margin: 0 8px;
    padding: 2px 0 1px;
    background: #fff;
    border: 1px solid var(--line);
    border-radius: 8px;
    font-size: 11px;
}

.group {
    min-width: 0;
    display: flex;
    flex-direction: column;
    border-right: 1px solid var(--line);
}

.body {
    flex: 1;
    min-height: 0;
    display: flex;
    align-items: flex-start;
    justify-content: center;
}

.group footer {
    height: 16px;
    flex: none;
    display: flex;
    align-items: center;
    color: var(--text);
    font-size: 10px;
    font-weight: 500;
    line-height: 16px;
}

.group footer span {
    flex: 1;
    text-align: center;
}

.launch {
    width: 14px;
}

.launch svg {
    width: 9px;
    height: 9px;
}

.off .launch,
.off {
    color: var(--muted);
}

.rows {
    display: flex;
    flex-direction: column;
    align-items: flex-start;
    justify-content: flex-start;
    gap: 8px;
}

.font .body,
.align .body,
.number .body {
    padding-top: 8px;
}

.row {
    display: flex;
    align-items: center;
    height: 22px;
}

.ico {
    width: 24px;
    height: 22px;
}

.drop {
    width: 9px;
    height: 22px;
}

.number .drop {
    width: 12px;
}

.sep {
    width: 1px;
    height: 22px;
    margin: 0 3px;
    background: var(--line);
}

.sep.tall {
    height: 58px;
    margin: 0 6px;
}

.combo {
    height: 22px;
    padding: 0 3px;
    appearance: none;
    border: 1px solid #8a8a8a;
    border-radius: 4px;
    background: url("data:image/svg+xml,%3Csvg xmlns='http://www.w3.org/2000/svg' width='8' height='8'%3E%3Cpath d='M1.500 2.800 4 5.200 6.500 2.800' fill='none' stroke='%23333' stroke-width='1.300'/%3E%3C/svg%3E") no-repeat right 2px center;
}

.combo:disabled {
    width: 137px;
    background-color: #e4e4e4;
    border-color: #ccc;
    color: #666;
    opacity: .5;
}

.big {
    flex-direction: column;
    justify-content: flex-start;
    line-height: 15px;
    padding-top: 3px;
}

.big > svg:first-child {
    height: 28px;
    margin-bottom: 4px;
}

.big span .chev {
    vertical-align: middle;
}

.lines {
    display: flex;
    flex-direction: column;
    align-items: stretch;
    justify-content: flex-start;
}

.line {
    flex: none;
    height: 24px;
    justify-content: flex-start;
    gap: 4px;
}

.clipboard {
    flex: 0 0 96px;
}

.clipboard .body {
    gap: 7px;
    padding-left: 3px;
}

.clipboard .stack {
    display: flex;
    flex-direction: column;
    gap: 2px;
}

.font {
    flex: 0 0 221px;
}

.font .body,
.number .body {
    padding-left: 7px;
}

.font-name {
    width: 115px;
    margin-right: 3px;
}

.font-size {
    width: 39px;
    margin-right: 4px;
}

.grow {
    font-size: 16px;
}

.grow svg {
    margin-bottom: 8px;
}

.shrink {
    font-size: 14px;
}

.bold {
    font-size: 12px;
    font-weight: 700;
}

.italic {
    font: italic 14px "Liberation Serif", serif;
}

.underline {
    font-size: 12px;
    text-decoration: underline;
}

.color {
    width: 16px;
    height: 16px;
    margin: 0 4px 0 10px;
    font-size: 13px;
    line-height: 12px;
    border-bottom: 4px solid #d01818;
}

.align {
    flex: 0 0 185px;
}

.align .body {
    justify-content: flex-start;
    padding-left: 6px;
}

.number {
    flex: 0 0 152px;
}

.symbol {
    font-size: 16px;
    color: #777;
}

.styles {
    flex: 0 0 185px;
}

.styles .body {
    gap: 4px;
}

.cells {
    flex: 0 0 92px;
}

.cells .lines {
    padding: 0 18px 0 11px;
}

.cells .line span {
    flex: 1;
    text-align: left;
}

.editing {
    flex: 0 0 140px;
}

.editing .body {
    gap: 6px;
}

.editing .line {
    gap: 6px;
}

.addins {
    flex: 0 0 59px;
}

.sum {
    flex: 0 0 66px;
}

.collapse {
    align-self: flex-end;
    margin: 0 8px 8px auto;
}

/* formula bar */
.formula-bar {
    height: 38px;
    flex: none;
    display: flex;
    align-items: center;
    padding: 0 8px;
}

.name-box,
.fx,
.formula {
    height: 23px;
    background-color: #fff;
    border: 1px solid #dcdcdc;
    border-radius: 4px;
}

.name-box {
    width: 94px;
    padding: 0 5px;
    appearance: none;
    background: #fff url("data:image/svg+xml,%3Csvg xmlns='http://www.w3.org/2000/svg' width='10' height='6'%3E%3Cpath d='m1 1 4 4 4-4' fill='none' stroke='%23333' stroke-width='1.300'/%3E%3C/svg%3E") no-repeat right 4px center;
}

.dots {
    margin: 0 8px;
}

.fx {
    width: 68px;
    display: flex;
    align-items: center;
    justify-content: space-around;
    margin-right: 5px;
}

.fn {
    font: italic 17px "Liberation Serif", serif;
}

.formula {
    flex: 1;
    display: flex;
    align-items: center;
    padding: 0 3px 0 12px;
}

.formula input {
    flex: 1;
    outline: none;
    font: 13px "Liberation Serif", serif;
}

/* sheet */
.sheet {
    flex: 1;
    min-height: 0;
    display: flex;
    border-bottom: 1px solid #b5b5b5;
}

.grid {
    flex: 1;
    min-width: 0;
    overflow: hidden;
    border-right: 1px solid #c0c0c0;
}

table {
    width: 100%;
    table-layout: fixed;
    border-collapse: separate;
    border-spacing: 0;
    font: 20px/20px "Liberation Serif", serif;
}

col {
    width: 6.7%;
}

.c-head {
    width: 38px;
}

.c-wide {
    width: 196px;
}

.c-rest {
    width: auto;
}

th {
    padding: 0;
    font-weight: normal;
    color: #444;
    background: var(--chrome);
}

thead th {
    height: 26px;
    padding-top: 1px;
    border-right: 1px solid #e0e0e0;
    border-bottom: 1px solid #b0b0b0;
}

.corner svg {
    display: block;
    margin: 0 3px 0 auto;
}

thead .selected {
    padding-top: 2px;
    background: #e0e0e0;
    border-bottom: 2px solid var(--green);
    color: var(--green);
}

tbody tr {
    height: 26px;
}

tbody th {
    border-right: 1px solid #b0b0b0;
    border-bottom: 1px solid #e4e4e4;
}

tbody .selected {
    background: #e0e0e0;
    border-right: 2px solid var(--green);
    color: var(--green);
}

td {
    padding: 0 3px;
    background: #fff;
    border-right: 1px solid var(--grid-line);
    border-bottom: 1px solid var(--grid-line);
    color: #000;
    text-align: right;
    white-space: nowrap;
}

.h-large {
    height: 78px;
}

.h-mid {
    height: 37px;
}

.large {
    font: 37px/48px "Noto Sans CJK SC", sans-serif;
    padding: 0 5px 14px 0;
}

.myanmar {
    font-family: "Noto Sans Myanmar", "Liberation Serif", serif;
    font-size: 18px;
    padding: 0 3px 4px 0;
}

.editing-cell {
    position: relative;
    text-align: left;
    outline: 2px solid var(--green);
    outline-offset: -1px;
}

.editing-cell::after {
    content: "";
    position: absolute;
    right: -3px;
    bottom: -3px;
    width: 6px;
    height: 6px;
    background: var(--green);
    border: 1px solid #fff;
}

.caret {
    border-right: 1px solid #000;
}

.vscroll {
    flex: 0 0 20px;
    display: flex;
    flex-direction: column;
    align-items: center;
    gap: 5px;
    padding: 5px 0 2px;
}

.vtrack {
    flex: 1;
}

.vthumb {
    width: 8px;
    height: 75%;
    border-radius: 4px;
    background: #666;
}

/* sheet tabs */
.tabs {
    height: 25px;
    flex: none;
    display: flex;
    align-items: center;
    padding-left: 14px;
    background: #f7f7f7;
    color: #555;
}

.nav {
    width: 27px;
}

.tabs .nav + .tab {
    margin-left: 26px;
}

.tab {
    width: 61px;
    height: 17px;
    border-right: 1px solid #b8b8b8;
    font-size: 11px;
}

.tab.active {
    height: 24px;
    align-self: flex-start;
    background: #fff;
    border-right: 1px solid #c8c8c8;
    border-left: 1px solid #c8c8c8;
    border-bottom: 2px solid var(--green);
    color: var(--green);
    font-weight: 700;
}

.add {
    margin-left: 29px;
}

.hscroll {
    flex: 0 0 41%;
    display: flex;
    align-items: center;
    gap: 4px;
    margin-left: auto;
    padding-right: 22px;
}

.hscroll .dots {
    margin: 0 14px 0 6px;
}

.htrack {
    flex: 1;
    padding-right: 38px;
}

.hthumb {
    height: 8px;
    border-radius: 4px;
    background: #6e6e6e;
}

/* status bar */
.status {
    height: 22px;
    flex: none;
    display: flex;
    align-items: center;
    padding: 0 8px 0 11px;
    background: #f5f5f5;
    font-size: 10px;
}

.mode {
    margin-right: 22px;
}

.access {
    gap: 3px;
    margin-left: 16px;
}

.views {
    display: flex;
    gap: 25px;
    margin: 0 20px 0 auto;
}

.zoom-btn {
    width: 10px;
    color: #aaa;
    font-size: 13px;
}

.status input {
    appearance: none;
    width: 90px;
    height: 12px;
    margin: 0 3px;
    background: linear-gradient(#888, #888) center / 100% 1px no-repeat;
}

.status input::-webkit-slider-thumb {
    appearance: none;
    width: 1px;
    height: 6px;
    background: #666;
}

.zoom {
    margin-left: 11px;
    color: #b5b5b5;
}

/* taskbar */
.taskbar {
    height: 37px;
    flex: none;
    display: flex;
    background: #101010;
    color: #fff;
}

.app {
    width: 46px;
    height: 37px;
    border-bottom: 2px solid transparent;
}

.app.current {
    background: #333;
    border-color: #f4cda3;
}

.app.open {
    width: 40px;
    margin-left: 3px;
    border-color: #f4cda3;
}

.tray {
    display: flex;
    align-items: center;
    gap: 9px;
    margin-left: auto;
    padding-right: 23px;
}

.battery {
    width: 50px;
    height: 24px;
    margin-right: 6px;
    position: relative;
    border: 1px solid #ddd;
    background: linear-gradient(90deg, #18a046 84%, #000 84%);
    display: flex;
    align-items: center;
    justify-content: center;
}

.battery::after {
    content: "";
    position: absolute;
    right: -4px;
    top: 5px;
    width: 4px;
    height: 12px;
    border: 1px solid #ddd;
    border-left: none;
    background: #000;
}

.lang {
    font-size: 11px;
    margin-left: 3px;
}

.clock {
    width: 48px;
    text-align: center;
    font-size: 10px;
    line-height: 17px;
    margin-right: 8px;
    white-space: nowrap;
}

.pointer {
    position: absolute;
    left: 204px;
    top: 157px;
}
```
